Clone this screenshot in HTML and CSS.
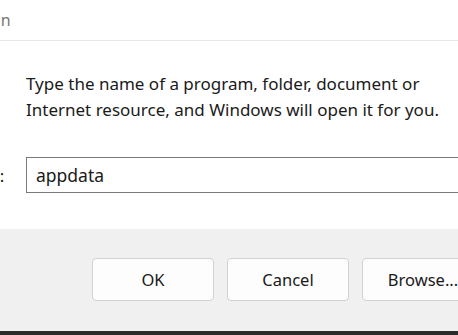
FILE: index.html
```html
<!DOCTYPE html>
<html lang="en">
<head>
    <meta charset="UTF-8">
    <title>Run</title>
    <link rel="stylesheet" href="styles.css">
</head>
<body>
    <div class="dialog">
        <div class="titlebar">
            <span class="title">Run</span>
        </div>

        <div class="content">
            <p class="hint">Type the name of a program, folder, document or<br>Internet resource, and Windows will open it for you.</p>

            <div class="open-row">
                <label class="open-label" for="cmd">Open:</label>
                <input class="open-input" id="cmd" type="text" value="appdata">
            </div>
        </div>

        <div class="footer">
            <button class="btn">OK</button>
            <button class="btn">Cancel</button>
            <button class="btn">Browse...</button>
        </div>
        <div class="taskbar"></div>
    </div>
</body>
</html>
```

FILE: styles.css
```css
body {
    margin: 0;
    font-family: 'Noto Sans', 'Open Sans', sans-serif;
    color: #1a1a1a;
    background: #fff;
    overflow: hidden;
}
.dialog {
    width: 458px;
    height: 335px;
    display: flex;
    flex-direction: column;
    overflow: hidden;
}
.titlebar {
    height: 40px;
    border-bottom: 1px solid #e6e6e6;
    display: flex;
    align-items: center;
    overflow: hidden;
}
.title {
    margin-left: -19px;
    font-size: 16px;
    color: #777;
}
.content {
    height: 188px;
    padding-left: 26px;
}
.hint {
    margin: 30px 0 0;
    font-size: 17px;
    line-height: 26px;
}
.open-row {
    display: flex;
    align-items: center;
    margin-top: 34px;
    margin-left: -26px;
}
.open-label {
    width: 26px;
    margin-left: -34px;
    padding-right: 34px;
    box-sizing: content-box;
    text-align: right;
    font-size: 17px;
    transform: translateX(-10px);
}
.open-input {
    flex: 1;
    height: 36px;
    box-sizing: border-box;
    margin-right: -20px;
    border: 1px solid #7a7a7a;
    padding: 0 9px;
    font-family: inherit;
    font-size: 17.5px;
    color: #1a1a1a;
    outline: none;
}
.footer {
    flex: 1;
    background: #f0f0f0;
    display: flex;
    gap: 13px;
    padding: 29px 0 0 92px;
    overflow: hidden;
}
.btn {
    flex: none;
    width: 122px;
    height: 43px;
    background: #fdfdfd;
    border: 1px solid #d2d2d2;
    border-radius: 4px;
    font-family: inherit;
    font-size: 16.5px;
    color: #1a1a1a;
}
.taskbar {
    height: 4px;
    background: #2a2a2a;
}
```
